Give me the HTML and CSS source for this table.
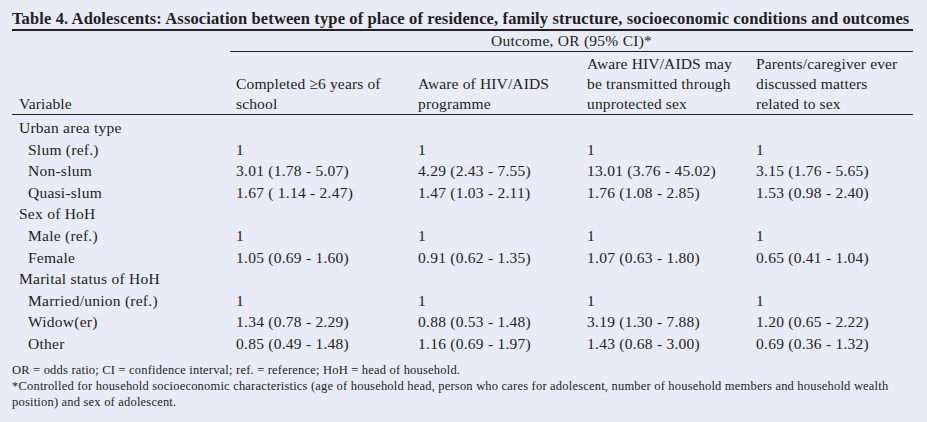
FILE: index.html
```html
<!DOCTYPE html>
<html>
<head>
<meta charset="utf-8">
<link rel="stylesheet" href="styles.css">
</head>
<body>
<div class="wrap">
  <div class="title">Table 4. Adolescents: Association between type of place of residence, family structure, socioeconomic conditions and outcomes</div>
  <table class="tbl">
    <colgroup>
      <col class="c1"><col class="c2"><col class="c3"><col class="c4"><col class="c5">
    </colgroup>
    <thead>
      <tr class="h1">
        <th></th>
        <th colspan="4" class="outcome">Outcome, OR (95% CI)*</th>
      </tr>
      <tr class="h2">
        <th>Variable</th>
        <th>Completed ≥6 years of school</th>
        <th>Aware of HIV/AIDS programme</th>
        <th>Aware HIV/AIDS may be transmitted through unprotected sex</th>
        <th>Parents/caregiver ever discussed matters related to sex</th>
      </tr>
    </thead>
    <tbody>
      <tr class="grp first"><td>Urban area type</td><td></td><td></td><td></td><td></td></tr>
      <tr><td class="sub">Slum (ref.)</td><td>1</td><td>1</td><td>1</td><td>1</td></tr>
      <tr><td class="sub">Non-slum</td><td>3.01 (1.78 - 5.07)</td><td>4.29 (2.43 - 7.55)</td><td>13.01 (3.76 - 45.02)</td><td>3.15 (1.76 - 5.65)</td></tr>
      <tr><td class="sub">Quasi-slum</td><td>1.67 ( 1.14 - 2.47)</td><td>1.47 (1.03 - 2.11)</td><td>1.76 (1.08 - 2.85)</td><td>1.53 (0.98 - 2.40)</td></tr>
      <tr class="grp"><td>Sex of HoH</td><td></td><td></td><td></td><td></td></tr>
      <tr><td class="sub">Male (ref.)</td><td>1</td><td>1</td><td>1</td><td>1</td></tr>
      <tr><td class="sub">Female</td><td>1.05 (0.69 - 1.60)</td><td>0.91 (0.62 - 1.35)</td><td>1.07 (0.63 - 1.80)</td><td>0.65 (0.41 - 1.04)</td></tr>
      <tr class="grp"><td>Marital status of HoH</td><td></td><td></td><td></td><td></td></tr>
      <tr><td class="sub">Married/union (ref.)</td><td>1</td><td>1</td><td>1</td><td>1</td></tr>
      <tr><td class="sub">Widow(er)</td><td>1.34 (0.78 - 2.29)</td><td>0.88 (0.53 - 1.48)</td><td>3.19 (1.30 - 7.88)</td><td>1.20 (0.65 - 2.22)</td></tr>
      <tr><td class="sub">Other</td><td>0.85 (0.49 - 1.48)</td><td>1.16 (0.69 - 1.97)</td><td>1.43 (0.68 - 3.00)</td><td>0.69 (0.36 - 1.32)</td></tr>
    </tbody>
  </table>
  <div class="notes">
    <p>OR = odds ratio; CI = confidence interval; ref. = reference; HoH = head of household.</p>
    <p>*Controlled for household socioeconomic characteristics (age of household head, person who cares for adolescent, number of household members and household wealth position) and sex of adolescent.</p>
  </div>
</div>
</body>
</html>
```

FILE: styles.css
```css
html, body {
  margin: 0;
  padding: 0;
  background: #e9ebf6;
}
body {
  width: 927px;
  height: 422px;
  overflow: hidden;
  font-family: "Liberation Serif", "Times New Roman", serif;
  color: #231f20;
}
.wrap {
  padding: 8px 14px 0 12px;
}
.title {
  font-weight: bold;
  font-size: 16.5px;
  letter-spacing: 0.12px;
  line-height: 21px;
  height: 21px;
  border-bottom: 2px solid #231f20;
  white-space: nowrap;
}
.tbl {
  width: 901px;
  border-collapse: collapse;
  table-layout: fixed;
  font-size: 15.5px;
  letter-spacing: 0.25px;
}
.c1 { width: 218px; }
.c2 { width: 182px; }
.c3 { width: 169px; }
.c4 { width: 169px; }
.c5 { width: 163px; }
.tbl th, .tbl td {
  padding: 0 0 0 6px;
  text-align: left;
  font-weight: normal;
  vertical-align: bottom;
  white-space: nowrap;
}
.h1 th {
  height: 20px;
  line-height: 20px;
}
.h1 th.outcome {
  text-align: center;
  padding-left: 0;
  border-bottom: 1px solid #231f20;
}
.h2 th {
  height: 62px;
  line-height: 20px;
  padding-bottom: 0;
  border-bottom: 1px solid #231f20;
  white-space: normal;
  letter-spacing: 0.15px;
}
.h2 th:first-child { padding-left: 7px; }
.tbl tbody td {
  height: 21.6px;
  line-height: 21.6px;
  padding-top: 0;
}
.tbl tbody tr.first td { padding-top: 2px; }
.tbl tbody tr.grp td:first-child { padding-left: 7px; }
.tbl tbody td.sub { padding-left: 16px; }
.notes {
  margin-top: 7px;
  font-size: 12.5px;
  letter-spacing: 0.2px;
  line-height: 16px;
}
.notes p {
  margin: 0;
}
```
